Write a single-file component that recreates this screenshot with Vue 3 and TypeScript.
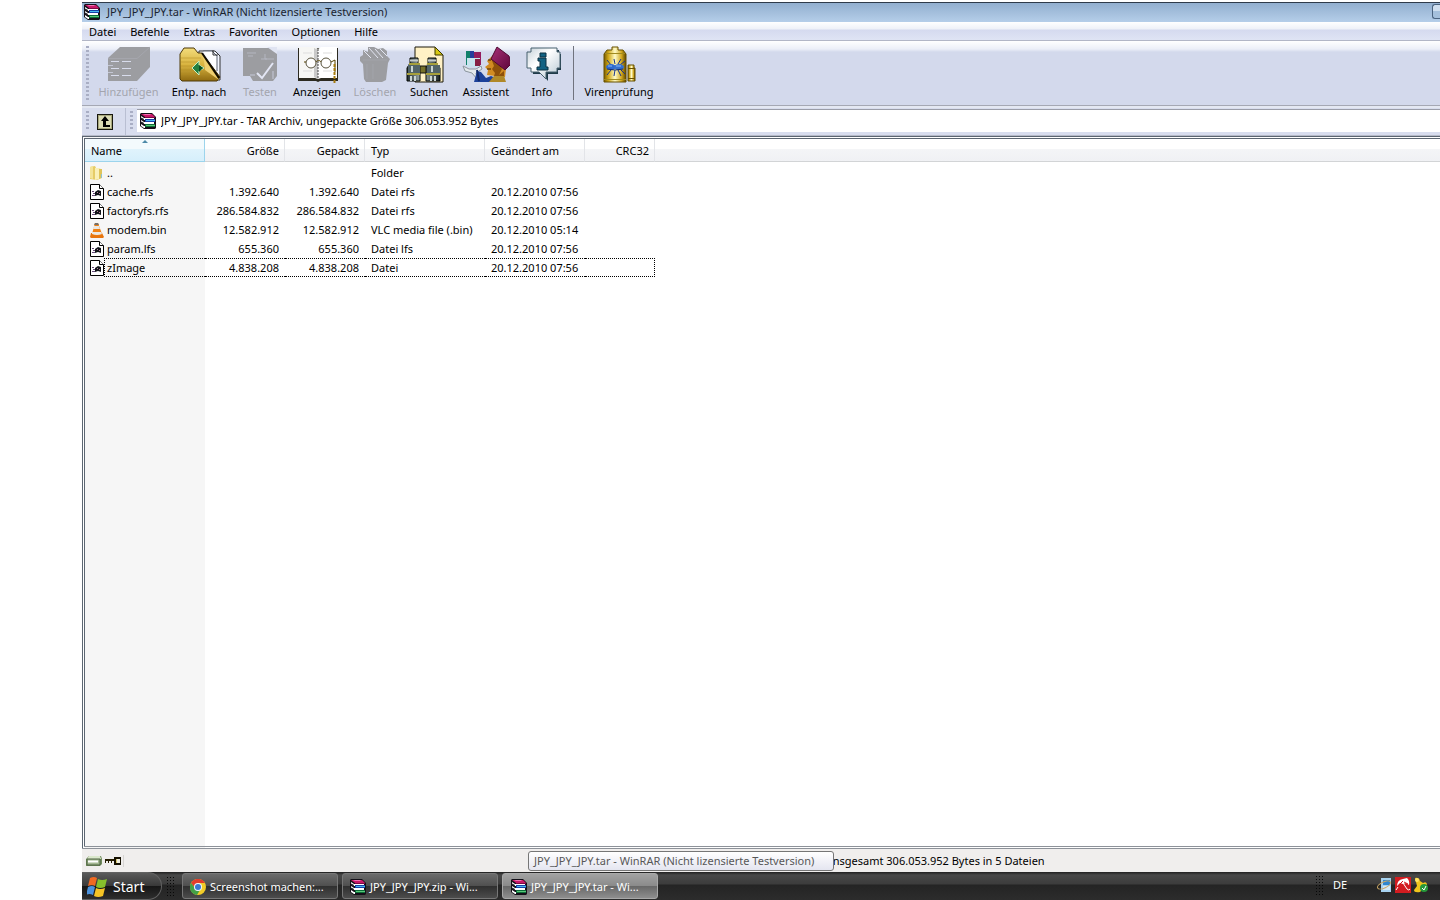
<script setup lang="ts">
import { ref } from 'vue'

interface Tool {
  id: string
  label: string
  disabled?: boolean
}

interface Entry {
  name: string
  icon: string
  size: string
  packed: string
  type: string
  modified: string
}

interface Task {
  title: string
  icon: string
  active?: boolean
}

const archive = 'JPY_JPY_JPY.tar'
const windowTitle = `${archive} - WinRAR (Nicht lizensierte Testversion)`
const address = ref(`${archive} - TAR Archiv, ungepackte Größe 306.053.952 Bytes`)

const menus: string[] = ['Datei', 'Befehle', 'Extras', 'Favoriten', 'Optionen', 'Hilfe']

const tools: Tool[] = [
  { id: 'add', label: 'Hinzufügen', disabled: true },
  { id: 'extract', label: 'Entp. nach' },
  { id: 'test', label: 'Testen', disabled: true },
  { id: 'view', label: 'Anzeigen' },
  { id: 'delete', label: 'Löschen', disabled: true },
  { id: 'find', label: 'Suchen' },
  { id: 'wizard', label: 'Assistent' },
  { id: 'info', label: 'Info' },
  { id: 'virus', label: 'Virenprüfung' },
]

const entries: Entry[] = [
  { name: '..', icon: 'folder', size: '', packed: '', type: 'Folder', modified: '' },
  { name: 'cache.rfs', icon: 'file', size: '1.392.640', packed: '1.392.640', type: 'Datei rfs', modified: '20.12.2010 07:56' },
  { name: 'factoryfs.rfs', icon: 'file', size: '286.584.832', packed: '286.584.832', type: 'Datei rfs', modified: '20.12.2010 07:56' },
  { name: 'modem.bin', icon: 'cone', size: '12.582.912', packed: '12.582.912', type: 'VLC media file (.bin)', modified: '20.12.2010 05:14' },
  { name: 'param.lfs', icon: 'file', size: '655.360', packed: '655.360', type: 'Datei lfs', modified: '20.12.2010 07:56' },
  { name: 'zImage', icon: 'file', size: '4.838.208', packed: '4.838.208', type: 'Datei', modified: '20.12.2010 07:56' },
]
const focused = ref('zImage')

const tasks: Task[] = [
  { title: 'Screenshot machen:...', icon: 'chrome' },
  { title: 'JPY_JPY_JPY.zip - Wi...', icon: 'rar' },
  { title: 'JPY_JPY_JPY.tar - Wi...', icon: 'rar', active: true },
]
</script>

<template>
  <div class="desktop">
    <svg class="sprites" aria-hidden="true">
      <defs>
        <linearGradient id="g-gold" x1="0" y1="0" x2="0" y2="1">
          <stop offset="0" stop-color="#f3dc7c" /><stop offset="0.5" stop-color="#d9b440" /><stop offset="1" stop-color="#8f6a10" />
        </linearGradient>
        <linearGradient id="g-can" x1="0" y1="0" x2="1" y2="0">
          <stop offset="0" stop-color="#7a5c00" /><stop offset="0.2" stop-color="#d0a818" /><stop offset="0.5" stop-color="#fffbc8" /><stop offset="0.8" stop-color="#cfa51c" /><stop offset="1" stop-color="#5c4400" />
        </linearGradient>
        <linearGradient id="g-tube" x1="0" y1="0" x2="1" y2="0">
          <stop offset="0" stop-color="#1f2a2c" /><stop offset="0.45" stop-color="#a9b8b8" /><stop offset="1" stop-color="#182022" />
        </linearGradient>
        <linearGradient id="g-info" x1="0" y1="0" x2="1" y2="1">
          <stop offset="0" stop-color="#c4d0d8" /><stop offset="0.4" stop-color="#ffffff" /><stop offset="1" stop-color="#b4c6d2" />
        </linearGradient>
        <linearGradient id="g-hat" x1="0" y1="0" x2="1" y2="1">
          <stop offset="0" stop-color="#a83078" /><stop offset="1" stop-color="#5c0638" />
        </linearGradient>
      </defs>

      <symbol id="i-rar" viewBox="0 0 16 16">
        <path d="M0 1l1-1h11l4 4v11l-1 1H4l-4-3z" fill="#141018" />
        <path d="M1 1h11l3 3H5z" fill="#c81868" /><path d="M3 1h7l1 1H5z" fill="#f070b0" />
        <path d="M5 4h10v1H5z" fill="#7c0844" />
        <path d="M1 3l3 2h10v2H4L1 5z" fill="#fff" />
        <path d="M5 6h10v3H5z" fill="#1840a8" /><path d="M6 7h9v1H6z" fill="#48b8f0" />
        <path d="M1 7l3 2h10v2H4L1 9z" fill="#fff" />
        <path d="M5 11h10v3H5z" fill="#0c6c38" /><path d="M6 12h9v1H6z" fill="#58c878" />
        <path d="M1 11l3 2h1v2H4l-3-2z" fill="#fff" />
        <path d="M0 4l4 2v1L0 5zM0 8l4 2v1L0 9z" fill="#141018" />
      </symbol>

      <symbol id="i-add" viewBox="0 0 48 38">
        <path d="M3 12L15 1h30v20L32 35H3z" fill="#9c9da1" />
        <path d="M3 12.500h29M32 12.500L45 1" stroke="#a5a6ad" fill="none" />
        <path d="M6 15.500h8M17 15.500h9M6 22.500h8M17 22.500h9M6 29.500h8M17 29.500h9" stroke="#d8dcec" />
        <path d="M3 19.500h5M3 26.500h5" stroke="#c3c6d4" />
      </symbol>
      <symbol id="i-extract" viewBox="0 0 48 38">
        <path d="M24 5h16l5 5v24H24z" fill="#f4f7ff" stroke="#333" />
        <path d="M28 5h9l5 5v15" fill="#fff" stroke="#5a6270" />
        <path d="M38 4v5h5" fill="none" stroke="#333" />
        <path d="M5 8l4-6h10l4 5h4l18 24-3 4H7l-2-2z" fill="url(#g-gold)" stroke="#4e3a08" />
        <path d="M6 12h20M6 16h17M6 20h14M6 24h16M6 28h24" stroke="#b38c22" opacity="0.5" />
        <path d="M26 8l3 7 1 9 14 10z" fill="#efcf70" />
        <path d="M27 7l17 25" stroke="#100c00" stroke-width="2" />
        <path d="M17 22l7-7v4l5 3-5 3v4z" fill="#258040" stroke="#c9f0c0" />
        <path d="M24 19l4 3-4 4z" fill="#0b5024" />
      </symbol>
      <symbol id="i-test" viewBox="0 0 48 38">
        <path d="M7 2h34v28l-4 5H17l-3-5H7z" fill="#9c9da1" />
        <path d="M11 7h9M12 10h5M29 8v5h9M25 13h6" stroke="#b4b6c0" fill="none" />
        <path d="M31 1h10v7z" fill="#e0e4f2" />
        <path d="M21 27l5 5 11-15" stroke="#e3e6f4" stroke-width="2" fill="none" />
        <path d="M14 29h5M37 25v8" stroke="#c6c9d8" />
      </symbol>
      <symbol id="i-view" viewBox="0 0 48 38">
        <path d="M5 2v33h18l2 1 2-1h18V2" fill="#2c2a20" />
        <path d="M6 1h16l3 2v30l-3-1H6z" fill="#f6f6f4" /><path d="M44 1H28l-3 2v30l3-1h16z" fill="#fff" />
        <path d="M21 2l4 2v29l-4-2z" fill="#c9c9c9" />
        <path d="M25 3v30" stroke="#444" stroke-dasharray="2 1" />
        <path d="M10 7h9M10 25h9M30 25h9M30 7h9" stroke="#ddd" />
        <circle cx="18" cy="17" r="5" fill="#fff" stroke="#57523d" />
        <circle cx="33" cy="17" r="5" fill="#fff" stroke="#57523d" />
        <path d="M11 16h2M23 16c1-2 4-2 5 0M38 16l4-2v12" stroke="#544100" fill="none" />
        <path d="M41.500 18v19" stroke="#a77c10" stroke-width="2" stroke-dasharray="3 1" />
      </symbol>
      <symbol id="i-delete" viewBox="0 0 48 38">
        <path d="M9 11l3-2V4l5 2V1h6l4 2 5-1 4 3v5l3 3-2 4-2 17-4 2H15l-2-3-1-15-3-3z" fill="#9c9da1" />
        <path d="M13 5l7 7M18 2l9 10M24 3l8 9M29 3l7 7" stroke="#e3e6f2" fill="none" />
        <path d="M12 14h24M16 18v15M22 18v15" stroke="#a2a4aa" />
      </symbol>
      <symbol id="i-find" viewBox="0 0 48 38">
        <path d="M10 1h20l8 8v27H10z" fill="#fff1c5" stroke="#1d1a0c" />
        <path d="M30 1v8h8z" fill="#d7c810" stroke="#3a3600" />
        <path d="M5 12h8v5l2 5v13H2V22l3-5zM23 12h8v5l4 5v13H21V22l2-5z" fill="url(#g-tube)" stroke="#050805" />
        <path d="M15 20h6v7h-6z" fill="#77712a" stroke="#111" />
        <path d="M3 19h12v8H3zM22 19h13v8H22z" fill="#526468" />
        <path d="M2 28h13M21 28h14M4 18h11M22 18h11" stroke="#a7a03b" stroke-width="2" />
        <path d="M5 14.500h8M23 14.500h8" stroke="#c5cccb" stroke-width="2" />
        <path d="M7 20v6M27 20v6M6 30v5M26 30v5M10 30v5M30 30v5" stroke="#cad4d2" stroke-width="2" />
      </symbol>
      <symbol id="i-wizard" viewBox="0 0 48 38">
        <path d="M4 5h4v14H4z" fill="#12806b" /><path d="M8 5h4v14H8z" fill="#253a9b" /><path d="M12 6h7v13h-7z" fill="#941b5e" />
        <path d="M5 12h13v9H5z" fill="#c8e4ee" /><path d="M13 13h5v7h-5z" fill="#852043" />
        <path d="M1 20l6 3h7l5-3 1 3-6 4 1 6-5-6-7-2z" fill="#e4e9ed" stroke="#8c969e" />
        <path d="M15 25l4 1 5 6 5-2 14 6H12z" fill="#1d419a" /><path d="M15 24l2 11" stroke="#122a68" stroke-width="2" />
        <path d="M31 9l-6 6 2 3-4 3 3 3-1 5 8 1 2 3 8-2 1-8z" fill="#d18b22" />
        <path d="M29 12l6 4 5 7-3 6 5-4v8H31l2-6-3-4 2-3z" fill="#8e510b" />
        <path d="M26 14h3M25 23h4" stroke="#402000" />
        <path d="M27 36l5-6h10l2 6z" fill="#b08929" />
        <path d="M35 1l12 9 2 8-6 6-14-11z" fill="url(#g-hat)" stroke="#4e0730" />
      </symbol>
      <symbol id="i-info" viewBox="0 0 48 38">
        <path d="M13 4h28v4h2v16h-3v4H30v7l-6-7h-9z" fill="#1f3b49" />
        <path d="M13 2h26v4h3v16h-3v4H28v7l-7-7h-8v-4H9V6h4z" fill="url(#g-info)" stroke="#47616f" />
        <path d="M22 7h6v4h-6zM20 12h8v9h2v3H19v-3h3v-6h-2z" fill="#126283" stroke="#0b3042" />
      </symbol>
      <symbol id="i-virus" viewBox="0 0 48 38">
        <path d="M9 8l3-4h5V1h6v3h5l3 4v28H9z" fill="url(#g-can)" stroke="#665000" />
        <path d="M10 7.500h20M9 33.500h22" stroke="#a08a20" />
        <path d="M33 19h6v3h1v13h-7z" fill="url(#g-can)" stroke="#665000" /><path d="M33 22.500h7M33 32.500h7" stroke="#6b5200" />
        <path d="M16 19l-4-5M20 18l-1-5M23 18l3-5M25 19l5-4M16 24l-4 5M20 24l-1 6M23 24l3 6M25 23l5 5" stroke="#18348c" />
        <ellipse cx="16" cy="21" rx="5" ry="3" fill="#2e6ad0" /><ellipse cx="24" cy="21" rx="5" ry="3" fill="#3571ce" />
        <path d="M12 23q8 2 16 0" stroke="#122c72" fill="none" /><path d="M13 20h4M21 20h5" stroke="#8cb8f4" />
      </symbol>

      <symbol id="i-folder" viewBox="0 0 16 16">
        <path d="M1 2l5-1 1 2 5 1 1 9-5 2-7-1z" fill="#e6cc66" /><path d="M1 2l3-1v13l-3-1z" fill="#f4e498" />
        <path d="M6 3h4v11l-4 1z" fill="#faf0b8" /><path d="M10 4h3v8l-3 2z" fill="#dfc45a" /><path d="M12 9h1v4h-1z" fill="#8fc4d0" />
      </symbol>
      <symbol id="i-file" viewBox="0 0 16 16">
        <path d="M1.500 .5h9l4 4v11h-13z" fill="#fff" stroke="#000" /><path d="M10.500 .5v4h4" fill="#fff" stroke="#000" />
        <path d="M3 7.500h2M4 9.500h3M3 11.500h3" stroke="#654878" />
        <path d="M6 8l3-2 3 1v5l-3-1-3 1z" fill="#101418" /><path d="M8 8h1v1H8zM10 9h1v1h-1z" fill="#b87c9c" />
      </symbol>
      <symbol id="i-cone" viewBox="0 0 16 16">
        <path d="M2 11h11l2 4-1 1H2l-1-1z" fill="#e8750d" /><path d="M6 1h3l4 11q-5 3-10 0z" fill="#f18213" />
        <path d="M5 4h5l1 3H4zM3 10h9l1 2q-5 2-10 0z" fill="#ebe8e2" /><path d="M6 1h3l1 2H5z" fill="#777067" />
      </symbol>
      <symbol id="i-chrome" viewBox="0 0 16 16">
        <circle cx="8" cy="8" r="8" fill="#f2cc28" />
        <path d="M1 4a8 8 0 0 1 14 0H8L5 9z" fill="#e23c2c" /><path d="M1 4a8 8 0 0 0 6 12l3-5-5-2z" fill="#43a047" />
        <circle cx="8" cy="8" r="4" fill="#eef6ff" /><circle cx="8" cy="8" r="3" fill="#3b78d0" />
      </symbol>
      <symbol id="i-flag" viewBox="0 0 20 20">
        <path d="M3 1q4-2 7 0L8 9Q5 7 1 9z" fill="#f06a22" /><path d="M11 2q4 2 9 0l-2 8q-5 2-9 0z" fill="#86c02c" />
        <path d="M1 10q4-2 7 0l-2 8q-4-2-7 0z" fill="#4b92de" /><path d="M9 11q4 2 9 0l-2 8q-5 2-9 0z" fill="#f6c425" />
      </symbol>
      <symbol id="i-drive" viewBox="0 0 16 12">
        <path d="M3 1h12l1 3v5l-2 2H0V4z" fill="#708b5c" /><path d="M3 1h11l1 3H1z" fill="#dbe8cc" />
        <path d="M1 4h13v6H1z" fill="#a3b891" stroke="#4d6141" /><path d="M2 6.500h10" stroke="#fff" stroke-width="2" />
      </symbol>
      <symbol id="i-key" viewBox="0 0 16 12">
        <path d="M0 4h10v2H7v2H6V6H4v2H3V6H1v2H0z" fill="#241c00" /><path d="M10 3h5v6h-5z" fill="#d8c66c" stroke="#151000" stroke-width="2" />
        <path d="M12 4h3v4h-3z" fill="#f0eee0" />
      </symbol>
      <symbol id="i-pc" viewBox="0 0 16 16">
        <path d="M4 1h10v14H4z" fill="#a7d2ef" /><path d="M6 3h7v5H6z" fill="#2f86cf" /><path d="M6 10h7M6 12h7" stroke="#fff" />
        <ellipse cx="7" cy="8" rx="7" ry="3" fill="none" stroke="#cba866" stroke-width="1" transform="rotate(-25 7 8)" />
      </symbol>
      <symbol id="i-umbrella" viewBox="0 0 16 16">
        <path d="M0 0h16v16H0z" fill="#d21c20" />
        <path d="M2 9Q2 3 8 2l4-1q3 3 2 7l-3-2-3 1-3-1z" fill="#fff" /><path d="M8 4l-4 4M9 5l4 2" stroke="#d21c20" />
        <path d="M8 6l4 6q2 2 3 0M3 10l-2 3" stroke="#fff" fill="none" />
      </symbol>
      <symbol id="i-safe" viewBox="0 0 16 16">
        <path d="M2 1q4-1 5 3l3 2q4-2 4 2l-3 3-4 4q-6 1-6-2l3-4z" fill="#f0c51c" /><circle cx="4" cy="3" r="2" fill="#ffe366" />
        <circle cx="11" cy="11" r="4" fill="#26983a" /><path d="M9 11l2 2 2-4" fill="none" stroke="#fff" />
      </symbol>
      <symbol id="i-up" viewBox="0 0 16 16">
        <path d="M0 0h16v16H0z" fill="#17170f" /><path d="M1 1h14v14H1z" fill="#a8a87c" /><path d="M2 2h12v12H2z" fill="#dcdcb4" />
        <path d="M8 2l4 5H9v4h4v2H6V7H4z" fill="#000" />
      </symbol>
    </svg>

    <main class="window">
      <header class="titlebar">
        <svg class="ico16"><use href="#i-rar" /></svg>
        <h1>{{ windowTitle }}</h1>
        <button class="minimize" type="button" aria-label="Minimieren"></button>
      </header>

      <nav class="menubar">
        <button v-for="menu in menus" :key="menu" type="button">{{ menu }}</button>
      </nav>

      <div class="toolbar">
        <span class="grip"></span>
        <button v-for="tool in tools" :key="tool.id" type="button" :class="['tool', tool.id]" :disabled="tool.disabled">
          <svg><use :href="`#i-${tool.id}`" /></svg>
          <span>{{ tool.label }}</span>
        </button>
      </div>

      <div class="addressbar">
        <span class="grip"></span>
        <button class="up" type="button" aria-label="Aufwärts"><svg class="ico16"><use href="#i-up" /></svg></button>
        <span class="grip"></span>
        <label class="address">
          <svg class="ico16"><use href="#i-rar" /></svg>
          <input v-model="address" type="text" aria-label="Adresse" readonly />
        </label>
      </div>

      <section class="list">
        <table>
          <colgroup>
            <col class="w120" /><col class="w80" /><col class="w80" /><col class="w120" /><col class="w100" /><col class="w70" /><col />
          </colgroup>
          <thead>
            <tr>
              <th class="sorted">Name</th>
              <th class="num">Größe</th>
              <th class="num">Gepackt</th>
              <th>Typ</th>
              <th>Geändert am</th>
              <th class="num">CRC32</th>
              <th class="rest"></th>
            </tr>
          </thead>
          <tbody>
            <tr v-for="entry in entries" :key="entry.name" :class="{ focused: entry.name === focused }" @click="focused = entry.name">
              <td class="name">
                <div>
                  <svg class="ico16"><use :href="`#i-${entry.icon}`" /></svg>
                  <span>{{ entry.name }}</span>
                </div>
              </td>
              <td class="num">{{ entry.size }}</td>
              <td class="num">{{ entry.packed }}</td>
              <td>{{ entry.type }}</td>
              <td>{{ entry.modified }}</td>
              <td class="num crc"></td>
              <td class="rest"></td>
            </tr>
          </tbody>
        </table>
      </section>

      <footer class="status">
        <div class="pane">
          <svg><use href="#i-drive" /></svg>
          <svg><use href="#i-key" /></svg>
        </div>
        <p>Insgesamt 306.053.952 Bytes in 5 Dateien</p>
        <div class="tooltip" role="tooltip">{{ windowTitle }}</div>
      </footer>
    </main>

    <div class="taskbar">
      <button class="start" type="button"><svg><use href="#i-flag" /></svg>Start</button>
      <span class="dots"></span>
      <button v-for="task in tasks" :key="task.title" type="button" :class="['task', { active: task.active }]">
        <svg class="ico16"><use :href="`#i-${task.icon}`" /></svg>
        <span>{{ task.title }}</span>
      </button>
      <div class="tray">
        <span class="dots"></span>
        <span class="lang">DE</span>
        <svg class="ico16"><use href="#i-pc" /></svg>
        <svg class="ico16"><use href="#i-umbrella" /></svg>
        <svg class="ico16"><use href="#i-safe" /></svg>
      </div>
    </div>
  </div>
</template>

<style>
body {
  background: #fff;
}
</style>

<style scoped>
* {
  box-sizing: border-box;
}
.desktop {
  display: flex;
  flex-direction: column;
  min-height: 100vh;
  padding: 2px 0 0 82px;
  font: 11px/16px 'Noto Sans', 'Open Sans', sans-serif;
  color: #000;
}
.sprites {
  position: absolute;
  width: 0;
  height: 0;
}
button,
input {
  font: inherit;
  color: inherit;
  background: none;
  border: 0;
  padding: 0;
  margin: 0;
}
.ico16 {
  width: 16px;
  height: 16px;
  flex: none;
}
.window {
  flex: 1;
  display: flex;
  flex-direction: column;
}
.titlebar {
  display: flex;
  align-items: center;
  height: 20px;
  padding: 0 0 2px 2px;
  border-top: 1px solid #2f3b4a;
  background: linear-gradient(#92afcf, #b5cee9);
}
.titlebar h1 {
  flex: 1;
  margin: 0 0 0 7px;
  font-size: 11px;
  line-height: 16px;
  font-weight: 400;
  color: #1a2430;
}
.minimize {
  width: 8px;
  height: 15px;
  border: 1px solid #4b6480;
  border-right: 0;
  border-radius: 3px 0 0 3px;
  background: linear-gradient(#d0dfef 50%, #a5c0dc 50%);
}
.menubar {
  display: flex;
  gap: 14px;
  height: 19px;
  padding: 2px 0 0 7px;
  border-bottom: 1px solid #b2b6c6;
  background: linear-gradient(#fff, #eef1f8 7px, #d5daef 8px, #dfe4f4);
}
.toolbar {
  display: grid;
  grid-template-columns: 12px 69px 72px 50px 64px 52px 56px 58px 54px 89px;
  height: 65px;
  border-bottom: 1px solid #a5a8b4;
  background: linear-gradient(#fff, #eceff8 8px, #d3d9ec 11px, #d3d9ec);
}
.grip {
  width: 3px;
  margin: 5px 0 3px 4px;
  background: repeating-linear-gradient(#a9aec4 0 2px, transparent 2px 4px);
}
.tool {
  display: flex;
  flex-direction: column;
  align-items: center;
  padding-top: 5px;
}
.tool svg {
  width: 48px;
  height: 38px;
  flex: none;
  overflow: visible;
}
.tool span {
  white-space: nowrap;
}
.tool:disabled {
  color: #a3a5ae;
}
.tool.virus {
  position: relative;
  padding-left: 11px;
}
.tool.virus::before {
  content: '';
  position: absolute;
  left: 4px;
  top: 5px;
  bottom: 5px;
  border-left: 1px solid #70737e;
}
.addressbar {
  display: flex;
  height: 30px;
  padding-top: 2px;
  border-bottom: 1px solid #b6bac8;
  background: linear-gradient(#e4e8f2 2px, #d8ddee 2px);
}
.addressbar .grip {
  margin-top: 3px;
  margin-bottom: 4px;
}
.up {
  width: 37px;
  padding-left: 8px;
  border-right: 1px solid #b9bfd2;
}
.up svg {
  display: block;
}
.address {
  flex: 1;
  display: flex;
  align-items: center;
  gap: 5px;
  margin: 1px 0 3px 4px;
  padding-left: 3px;
  background: #fff;
  border-top: 1px solid #9a9da8;
}
.address input {
  flex: 1;
  outline: 0;
}
.list {
  flex: 1;
  border: double #5c6672;
  border-width: 3px 0 3px 3px;
  border-bottom-color: #8d9299;
  background: linear-gradient(90deg, #f6f6f6 120px, #fff 120px);
}
table {
  width: 100%;
  table-layout: fixed;
  border-spacing: 0;
}
.w70 { width: 70px; }
.w80 { width: 80px; }
.w100 { width: 100px; }
.w120 { width: 120px; }
th {
  height: 23px;
  padding: 2px 6px 0;
  font-weight: 400;
  text-align: left;
  border-right: 1px solid #e2e4e8;
  border-bottom: 1px solid #d2d4d6;
  background: linear-gradient(#fff 45%, #f4f5f7 45%, #f0f1f4);
}
th.num {
  padding-right: 5px;
}
th.rest {
  border-right: 0;
}
th.sorted {
  position: relative;
  border-color: #9cd4ec;
  background: linear-gradient(#f3fafd 45%, #e0f3fc 45%, #d6effb);
}
th.sorted::before {
  content: '';
  position: absolute;
  left: 57px;
  top: 1px;
  border: 3px solid transparent;
  border-top: 0;
  border-bottom-color: #4d89a8;
}
td {
  height: 19px;
  padding: 0 6px;
  border: 0;
  line-height: 17px;
  white-space: nowrap;
}
tbody tr:first-child td {
  height: 20px;
  padding-top: 1px;
}
.num {
  text-align: right;
}
td.name {
  padding: 0;
}
.name div {
  display: flex;
  align-items: center;
  padding-left: 4px;
}
.name span {
  flex: 1;
  padding-left: 2px;
}
.focused .name span {
  margin-left: -1px;
  border: 1px dotted #000;
  border-right: 0;
}
.focused td:not(.name):not(.rest) {
  border-top: 1px dotted #000;
  border-bottom: 1px dotted #000;
}
.focused td.crc {
  border-right: 1px dotted #000;
}
.status {
  position: relative;
  display: flex;
  align-items: center;
  height: 23px;
  padding-top: 1px;
  background: #f0eeed;
}
.pane {
  display: flex;
  gap: 3px;
  width: 42px;
  padding-left: 4px;
  border-right: 1px solid #d6d4d2;
}
.pane svg {
  width: 16px;
  height: 12px;
}
.status p {
  margin: 0 0 0 705px;
}
.tooltip {
  position: absolute;
  left: 446px;
  top: 2px;
  min-width: 306px;
  height: 20px;
  padding: 1px 5px;
  border: 1px solid #767676;
  border-radius: 3px;
  background: linear-gradient(#fff, #e4e5f0);
  color: #575757;
  white-space: nowrap;
}
.taskbar {
  display: flex;
  align-items: center;
  gap: 4px;
  height: 28px;
  color: #fff;
  background: linear-gradient(#202020, #484848 3px, #3c3c3c 12px, #242424 13px, #2c2c2c);
}
.start {
  display: flex;
  align-items: center;
  gap: 6px;
  align-self: stretch;
  width: 80px;
  padding: 2px 0 0 5px;
  border: 1px solid #626262;
  border-left: 0;
  border-radius: 0 14px 14px 0;
  background: linear-gradient(#5a5a5a, #383838 50%, #161616 51%, #2e2e2e);
  font-size: 14px;
}
.start svg {
  width: 20px;
  height: 20px;
}
.dots {
  width: 10px;
  height: 20px;
  margin-right: 2px;
  background: radial-gradient(#080808 1px, transparent 1px) 0 0 / 3px 3px;
}
.task {
  display: flex;
  align-items: center;
  gap: 4px;
  width: 156px;
  height: 26px;
  padding: 1px 0 0 7px;
  border: 1px solid #777;
  border-radius: 3px;
  background: linear-gradient(#6b6b6b, #505050 48%, #303030 52%, #4c4c4c);
  white-space: nowrap;
}
.task.active {
  padding-left: 8px;
  border-color: #a8a8a8;
  background: linear-gradient(#a2a2a2, #8b8b8b 48%, #686868 52%, #8e8e8e);
}
.tray {
  display: flex;
  align-items: center;
  gap: 2px;
  margin-left: auto;
  padding: 0 11px 2px 0;
}
.lang {
  width: 46px;
  padding-left: 4px;
}
</style>
